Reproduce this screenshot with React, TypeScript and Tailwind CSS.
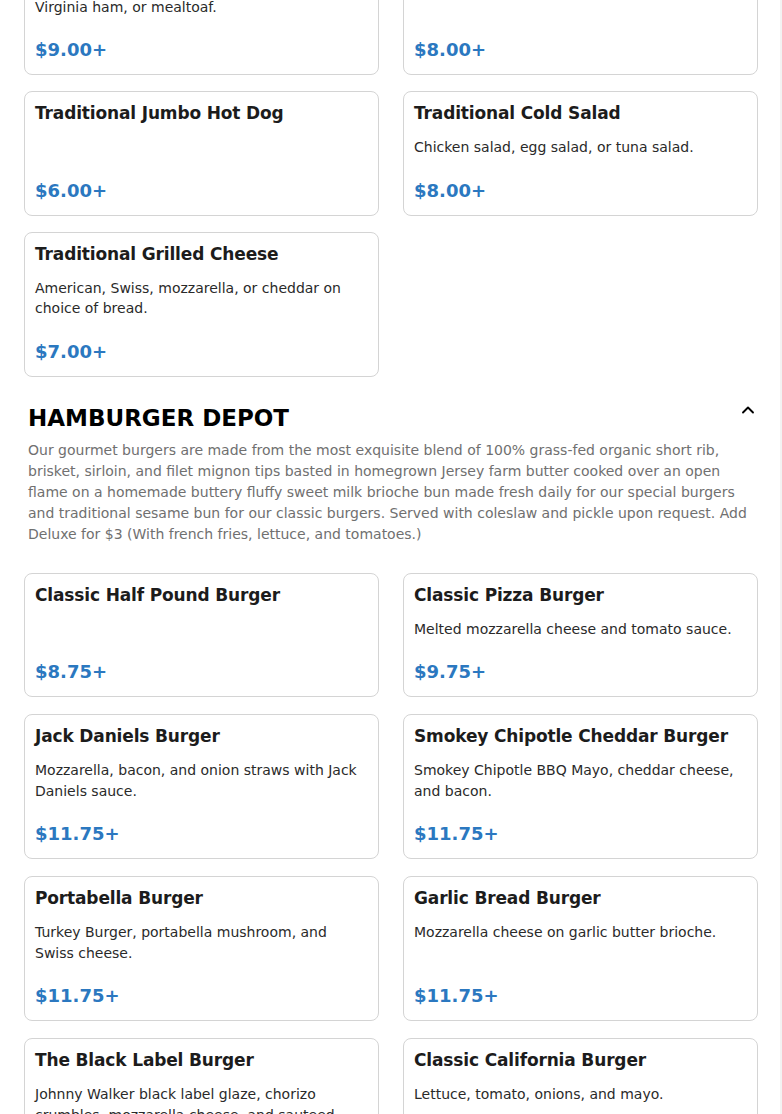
import { ChevronUp } from "lucide-react";

type Item = {
  name: string;
  desc?: string;
  price: string;
};

const topItems: Item[] = [
  {
    name: "Traditional Cold Sandwich",
    desc: "Turkey, ham, roast beef, salami, bologna, Virginia ham, or mealtoaf.",
    price: "$9.00+",
  },
  {
    name: "Traditional Hot Sandwich",
    desc: "Pastrami, corned beef, or brisket.",
    price: "$8.00+",
  },
  { name: "Traditional Jumbo Hot Dog", price: "$6.00+" },
  {
    name: "Traditional Cold Salad",
    desc: "Chicken salad, egg salad, or tuna salad.",
    price: "$8.00+",
  },
  {
    name: "Traditional Grilled Cheese",
    desc: "American, Swiss, mozzarella, or cheddar on choice of bread.",
    price: "$7.00+",
  },
];

const burgers: Item[] = [
  { name: "Classic Half Pound Burger", price: "$8.75+" },
  {
    name: "Classic Pizza Burger",
    desc: "Melted mozzarella cheese and tomato sauce.",
    price: "$9.75+",
  },
  {
    name: "Jack Daniels Burger",
    desc: "Mozzarella, bacon, and onion straws with Jack Daniels sauce.",
    price: "$11.75+",
  },
  {
    name: "Smokey Chipotle Cheddar Burger",
    desc: "Smokey Chipotle BBQ Mayo, cheddar cheese, and bacon.",
    price: "$11.75+",
  },
  {
    name: "Portabella Burger",
    desc: "Turkey Burger, portabella mushroom, and Swiss cheese.",
    price: "$11.75+",
  },
  {
    name: "Garlic Bread Burger",
    desc: "Mozzarella cheese on garlic butter brioche.",
    price: "$11.75+",
  },
  {
    name: "The Black Label Burger",
    desc: "Johnny Walker black label glaze, chorizo crumbles, mozzarella cheese, and sauteed onions.",
    price: "$13.75+",
  },
  {
    name: "Classic California Burger",
    desc: "Lettuce, tomato, onions, and mayo.",
    price: "$11.75+",
  },
];

const MenuCard = ({ item }: { item: Item }) => {
  return (
    <div className="flex flex-col rounded-lg border border-[#d4d4d4] bg-white px-[10px] pt-[11px] pb-[12px]">
      <h3 className="text-[17px] font-bold leading-[20px] tracking-[-0.15px] text-[#1c1c1c]">
        {item.name}
      </h3>
      {item.desc && (
        <p className="mt-[14px] text-[14px] leading-[20.5px] text-[#2a2a2a]">{item.desc}</p>
      )}
      <div className="mt-auto pt-[21px] text-[18px] font-bold leading-[24px] text-[#2b78c0]">
        {item.price}
      </div>
    </div>
  );
};

export default function App() {
  return (
    <div
      className="h-[1114px] w-[782px] overflow-hidden border-r-2 border-[#f3f3f3] bg-white"
      style={{ fontFamily: '"DejaVu Sans", "Noto Sans", sans-serif' }}
    >
      <div className="-mt-[70px] pl-6 pr-[22px]">
        {/* Traditional section (scrolled) */}
        <div className="grid grid-cols-2 gap-x-6 gap-y-4">
          {topItems.map((item) => (
            <MenuCard key={item.name} item={item} />
          ))}
        </div>

        {/* Hamburger Depot */}
        <div className="px-1 pt-[27px]">
          <div className="flex items-center justify-between">
            <h2 className="text-[23px] font-bold leading-[28px] text-black">HAMBURGER DEPOT</h2>
            <ChevronUp className="-mr-[4px] -mt-[16px] h-5 w-5 text-black" strokeWidth={2.25} />
          </div>
          <p className="mt-[8px] text-[14px] leading-[21px] text-[#707070]">
            Our gourmet burgers are made from the most exquisite blend of 100% grass-fed organic
            short rib, brisket, sirloin, and filet mignon tips basted in homegrown Jersey farm
            butter cooked over an open flame on a homemade buttery fluffy sweet milk brioche bun
            made fresh daily for our special burgers and traditional sesame bun for our classic
            burgers. Served with coleslaw and pickle upon request. Add Deluxe for $3 (With french
            fries, lettuce, and tomatoes.)
          </p>
        </div>

        <div className="mt-[28px] grid grid-cols-2 gap-x-6 gap-y-[17px]">
          {burgers.map((item) => (
            <MenuCard key={item.name} item={item} />
          ))}
        </div>
      </div>
    </div>
  );
}
